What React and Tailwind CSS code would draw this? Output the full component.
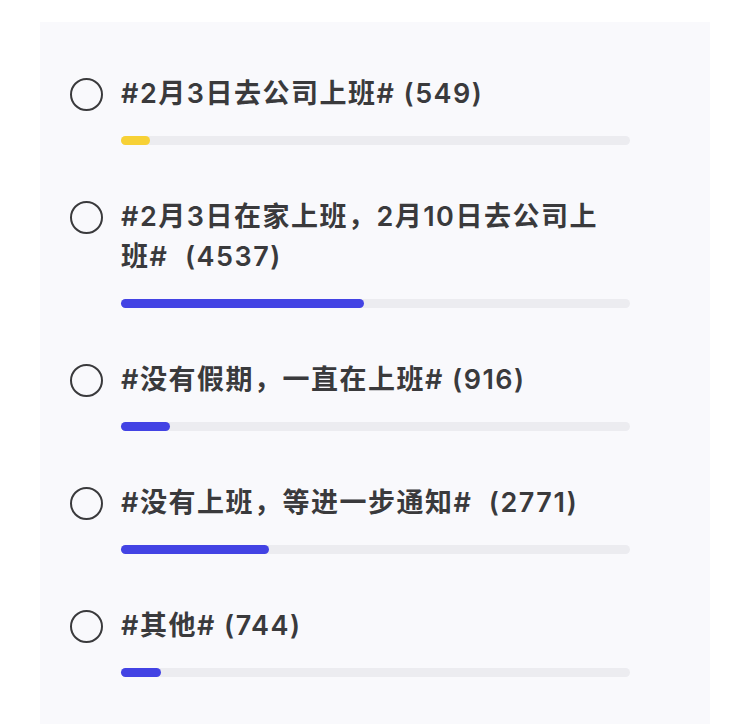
import React from 'react';

const options = [
  { label: '#2月3日去公司上班# (549)', votes: 549, color: 'bg-[#f7d136]' },
  { label: '#2月3日在家上班，2月10日去公司上班#\u00a0 (4537)', votes: 4537, color: 'bg-[#4343e4]' },
  { label: '#没有假期，一直在上班# (916)', votes: 916, color: 'bg-[#4343e4]' },
  { label: '#没有上班，等进一步通知#\u00a0 (2771)', votes: 2771, color: 'bg-[#4343e4]' },
  { label: '#其他# (744)', votes: 744, color: 'bg-[#4343e4]' },
];

const total = options.reduce((s, o) => s + o.votes, 0);

export default function App() {
  return (
    <div className="w-[750px] h-[724px] bg-white overflow-hidden pt-[22px] pl-[40px]">
      <div
        className="w-[670px] h-[702px] bg-[#f9f9fc] pl-[30px] pt-[52px] flex flex-col gap-[52px]"
        style={{ fontFamily: 'Inter, "Noto Sans CJK SC", sans-serif' }}
      >
        {options.map((o) => (
          <div key={o.label} className="flex gap-[18px]">
            <div className="shrink-0 w-[33px] h-[33px] mt-[4px] rounded-full border-2 border-[#3a3a3c]" />
            <div className="w-[509px]">
              <div className="pr-[8px] text-[27px] leading-[40px] font-semibold tracking-[1.5px] text-[#3a3a3c]">
                {o.label}
              </div>
              <div className="mt-[22px] h-[9px] w-full rounded-full bg-[#ececf0]">
                <div
                  className={`h-full rounded-full ${o.color}`}
                  style={{ width: `${(o.votes / total) * 100}%` }}
                />
              </div>
            </div>
          </div>
        ))}
      </div>
    </div>
  );
}
